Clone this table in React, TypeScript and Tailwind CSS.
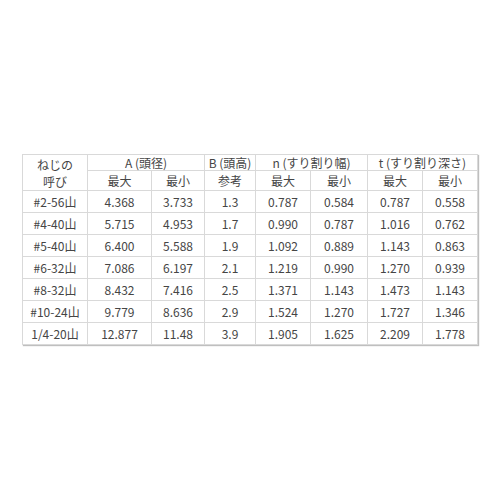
import React from "react";

const rows: string[][] = [
  ["#2-56山", "4.368", "3.733", "1.3", "0.787", "0.584", "0.787", "0.558"],
  ["#4-40山", "5.715", "4.953", "1.7", "0.990", "0.787", "1.016", "0.762"],
  ["#5-40山", "6.400", "5.588", "1.9", "1.092", "0.889", "1.143", "0.863"],
  ["#6-32山", "7.086", "6.197", "2.1", "1.219", "0.990", "1.270", "0.939"],
  ["#8-32山", "8.432", "7.416", "2.5", "1.371", "1.143", "1.473", "1.143"],
  ["#10-24山", "9.779", "8.636", "2.9", "1.524", "1.270", "1.727", "1.346"],
  ["1/4-20山", "12.877", "11.48", "3.9", "1.905", "1.625", "2.209", "1.778"],
];

const widths = [65, 64, 53, 51, 55, 57, 55, 55];

export default function App() {
  const base = "border border-[#d9d9d9] text-center align-middle p-0";
  const cell = base + " leading-none";
  return (
    <div className="w-[500px] h-[500px] bg-white relative" style={{ fontFamily: '"Noto Sans CJK JP", "Noto Sans", sans-serif' }}>
      <div className="absolute left-[22px] top-[154px] shadow-[1px_1px_1px_rgba(0,0,0,0.25)]">
        <table className="border-collapse border border-[#8c8c8c] text-[12px] text-[#454545] table-fixed">
          <colgroup>
            {widths.map((w, i) => (
              <col key={i} style={{ width: w }} />
            ))}
          </colgroup>
          <tbody>
            <tr className="h-[16px]">
              <td rowSpan={2} className={base}>
                <div className="leading-[17px]">ねじの</div>
                <div className="leading-[17px]">呼び</div>
              </td>
              <td colSpan={2} className={cell}>A (頭径)</td>
              <td className={cell}>B (頭高)</td>
              <td colSpan={2} className={cell}>n (すり割り幅)</td>
              <td colSpan={2} className={cell}>t (すり割り深さ)</td>
            </tr>
            <tr className="h-[20px]">
              <td className={cell}>最大</td>
              <td className={cell}>最小</td>
              <td className={cell}>参考</td>
              <td className={cell}>最大</td>
              <td className={cell}>最小</td>
              <td className={cell}>最大</td>
              <td className={cell}>最小</td>
            </tr>
            {rows.map((r, i) => (
              <tr key={i} className="h-[22px]">
                {r.map((v, j) => (
                  <td key={j} className={cell}>
                    {v}
                  </td>
                ))}
              </tr>
            ))}
          </tbody>
        </table>
      </div>
    </div>
  );
}
